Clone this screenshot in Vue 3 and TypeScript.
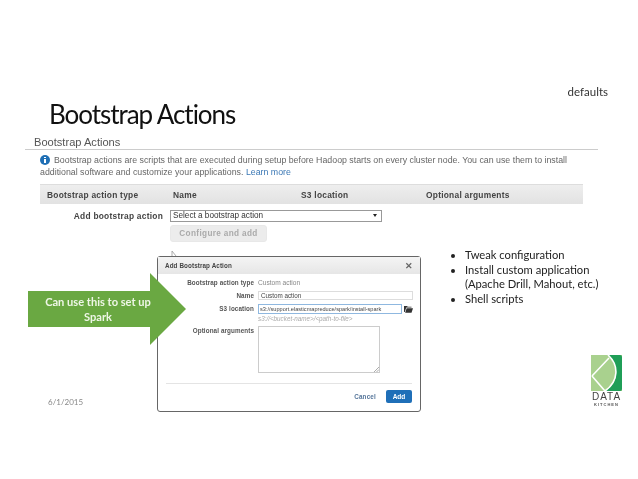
<script setup lang="ts">
const columns: string[] = ['Bootstrap action type', 'Name', 'S3 location', 'Optional arguments']
const bullets: string[] = ['Tweak configuration', 'Install custom application (Apache Drill, Mahout, etc.)', 'Shell scripts']
</script>

<template>
  <div class="slide">
    <p class="defaults">defaults</p>
    <h1 class="title">Bootstrap Actions</h1>

    <section class="console">
      <h2 class="console-title">Bootstrap Actions</h2>
      <p class="info">
        <span class="info-icon"></span>Bootstrap actions are scripts that are executed during setup before Hadoop starts on every cluster node. You can use them to install additional software and customize your applications. <a class="link">Learn more</a>
      </p>
      <div class="table-head">
        <span v-for="col in columns" :key="col" class="col">{{ col }}</span>
      </div>
      <div class="add-row">
        <label class="add-label">Add bootstrap action</label>
        <div class="add-controls">
          <div class="select">Select a bootstrap action<span class="caret"></span></div>
          <button class="configure">Configure and add</button>
        </div>
      </div>
    </section>

    <svg class="behind" viewBox="0 0 6 5" width="6" height="5">
      <path d="M1 5V0l4 5" fill="none" stroke="#999" stroke-width="0.8" />
    </svg>

    <div class="modal">
      <div class="modal-head">
        <span>Add Bootstrap Action</span>
        <span class="close">✕</span>
      </div>
      <div class="form">
        <span class="form-label">Bootstrap action type</span>
        <span class="static">Custom action</span>
        <span class="form-label">Name</span>
        <div class="input name">Custom action</div>
        <span class="form-label">S3 location</span>
        <div>
          <div class="s3-line">
            <div class="input s3">s3://support.elasticmapreduce/spark/install-spark</div>
            <svg class="folder" viewBox="0 0 12 10" width="9" height="8">
              <path d="M0 1h4l1 1h5v1H3L1 9H0zM3.500 4H12l-2 6H1.500z" fill="#333" />
            </svg>
          </div>
          <div class="hint">s3://&lt;bucket-name&gt;/&lt;path-to-file&gt;</div>
        </div>
        <span class="form-label">Optional arguments</span>
        <div class="textarea">
          <svg class="grip" viewBox="0 0 5 5" width="5" height="5">
            <path d="M0 5l5-5M2.500 5L5 2.500" stroke="#888" stroke-width="0.7" />
          </svg>
        </div>
      </div>
      <div class="modal-foot">
        <a class="cancel">Cancel</a>
        <button class="add">Add</button>
      </div>
    </div>

    <div class="arrow">
      <span class="arrow-text">Can use this to set up Spark</span>
    </div>

    <ul class="bullets">
      <li v-for="b in bullets" :key="b">{{ b }}</li>
    </ul>

    <span class="date">6/1/2015</span>

    <div class="logo">
      <svg viewBox="0 0 31 36" width="31" height="36">
        <rect width="31" height="36" fill="#a9d18e" />
        <path d="M17 0h12a2 2 0 0 1 2 2v32a2 2 0 0 1-2 2H14C26 30 30 14 17 0z" fill="#1f9e57" />
        <path d="M17 0c11 10 11 26-3 36M1 21L18 3M1 21l13 15" fill="none" stroke="#fff" stroke-width="1.600" />
      </svg>
      <span class="logo-data">DATA</span>
      <span class="logo-kitchen">KITCHEN</span>
    </div>
  </div>
</template>

<style scoped>
.slide {
  position: relative;
  width: 638px;
  height: 479px;
  overflow: hidden;
  background: #fff;
  font-family: "Liberation Sans", Arial, sans-serif;
  filter: blur(0.4px);
}

.defaults {
  margin: 0;
  padding: 85px 30px 0 0;
  text-align: right;
  font: 11.500px/14px Lato, sans-serif;
  color: #333;
}

.title {
  margin: 0;
  padding: 0 0 0 49px;
  height: 30px;
  font: 400 26px/30px Lato, sans-serif;
  letter-spacing: -1.050px;
  color: #111;
}

.console {
  margin: 5px 40px 0 25px;
}

.console-title {
  margin: 0;
  padding: 1px 0 0 9px;
  height: 14px;
  font-size: 11.100px;
  font-weight: 400;
  line-height: 15px;
  color: #555;
  border-bottom: 1px solid #ccc;
}

.info {
  margin: 5px 0 0 15px;
  width: 560px;
  font-size: 8.800px;
  line-height: 11.500px;
  color: #666;
}

.info-icon {
  display: inline-block;
  position: relative;
  width: 10px;
  height: 10px;
  margin-top: -2px;
  margin-right: 4px;
  border-radius: 50%;
  background: #1f6fb5;
  vertical-align: -2px;
}

/* the "i" of the info badge, drawn with two small bars */
.info-icon::before {
  content: "";
  position: absolute;
  left: 4px;
  top: 2px;
  width: 2px;
  height: 1px;
  background: #fff;
}

.info-icon::after {
  content: "";
  position: absolute;
  left: 4px;
  top: 4px;
  width: 2px;
  height: 4px;
  background: #fff;
}

.link {
  color: #3b78b5;
}

.table-head {
  display: grid;
  grid-template-columns: 126px 128px 125px 1fr;
  align-items: center;
  margin: 6px 15px 0 15px;
  height: 20px;
  padding-left: 7px;
  background: linear-gradient(#eeeeee, #e2e2e2);
  border-top: 1px solid #ddd;
  box-sizing: border-box;
}

.col {
  font-size: 8.400px;
  font-weight: 700;
  letter-spacing: 0.25px;
  color: #444;
}

.add-row {
  display: flex;
  gap: 7px;
  margin-top: 6px;
}

.add-label {
  width: 138px;
  text-align: right;
  font-size: 8.400px;
  font-weight: 700;
  letter-spacing: 0.25px;
  line-height: 12px;
  color: #444;
}

.add-controls {
  display: flex;
  flex-direction: column;
  align-items: flex-start;
  gap: 3px;
}

.select {
  position: relative;
  width: 212px;
  height: 12px;
  padding-left: 2px;
  box-sizing: border-box;
  border: 1px solid #999;
  font-size: 8.200px;
  line-height: 10px;
  color: #333;
}

.caret {
  position: absolute;
  right: 4px;
  top: 3px;
  border-left: 2px solid transparent;
  border-right: 2px solid transparent;
  border-top: 3px solid #222;
}

.configure {
  width: 97px;
  height: 17px;
  padding: 0;
  border: 1px solid #e8e8e8;
  border-radius: 3px;
  background: #ececec;
  font: 700 8.200px "Liberation Sans", Arial, sans-serif;
  letter-spacing: 0.35px;
  color: #aaa;
}

.behind {
  position: absolute;
  left: 171px;
  top: 251px;
}

.modal {
  position: absolute;
  left: 157px;
  top: 256px;
  width: 264px;
  height: 156px;
  box-sizing: border-box;
  border: 1.500px solid #666;
  border-radius: 3px;
  background: #fff;
  font-size: 6.300px;
}

.modal-head {
  display: flex;
  justify-content: space-between;
  align-items: center;
  height: 17px;
  padding: 0 7px;
  background: linear-gradient(#f4f4f4, #e6e6e6);
  font-weight: 700;
  letter-spacing: 0.1px;
  color: #444;
}

.close {
  font-size: 9px;
  color: #666;
}

.form {
  display: grid;
  grid-template-columns: 96px 1fr;
  column-gap: 4px;
  row-gap: 3px;
  align-items: start;
  padding: 4px 8px 0 0;
  height: 94px;
  box-sizing: border-box;
}

.form-label {
  text-align: right;
  font-weight: 700;
  letter-spacing: 0.1px;
  line-height: 10px;
  color: #555;
}

.static {
  font-size: 6.600px;
  line-height: 10px;
  color: #888;
}

.input {
  height: 9px;
  box-sizing: border-box;
  border: 1px solid #ddd;
  padding-left: 2px;
  font-size: 6.300px;
  line-height: 7px;
  color: #444;
  white-space: nowrap;
  overflow: hidden;
}

.s3-line {
  display: flex;
  align-items: center;
  gap: 2px;
}

.s3 {
  width: 144px;
  height: 10px;
  padding-left: 1px;
  font-size: 5.600px;
  line-height: 8px;
  border-color: #8fb8e0;
}

.folder {
  flex: none;
}

.hint {
  margin-top: 1px;
  font-size: 6.300px;
  font-style: italic;
  line-height: 8px;
  color: #aaa;
}

.textarea {
  position: relative;
  width: 122px;
  height: 47px;
  box-sizing: border-box;
  border: 1px solid #ccc;
}

.grip {
  position: absolute;
  right: 0;
  bottom: 0;
}

.modal-foot {
  display: flex;
  justify-content: flex-end;
  align-items: center;
  gap: 10px;
  margin: 15px 8px 0;
  padding-top: 6px;
  border-top: 1px solid #e4e4e4;
}

.cancel {
  font-weight: 700;
  letter-spacing: 0.2px;
  color: #55759a;
}

.add {
  width: 26px;
  height: 13px;
  padding: 0;
  border: 0;
  border-radius: 2px;
  background: #1f6fb8;
  color: #fff;
  font: 700 6.500px "Liberation Sans", Arial, sans-serif;
}

.arrow {
  position: absolute;
  left: 28px;
  top: 273px;
  width: 158px;
  height: 72px;
  display: flex;
  align-items: center;
  background: #6aa842;
  clip-path: polygon(0 18px, 122px 18px, 122px 0, 158px 36px, 122px 72px, 122px 54px, 0 54px);
}

.arrow-text {
  width: 140px;
  padding: 0 14px;
  box-sizing: border-box;
  text-align: center;
  font: 700 11.100px/15px Lato, sans-serif;
  color: #eef6e6;
}

.bullets {
  position: absolute;
  left: 465px;
  top: 248px;
  width: 145px;
  margin: 0;
  padding: 0;
  list-style: disc;
  font: 11.200px/14.500px Lato, sans-serif;
  color: #222;
}

.date {
  position: absolute;
  left: 48px;
  top: 397px;
  font: 8px/10px Lato, sans-serif;
  color: #888;
}

.logo {
  position: absolute;
  left: 591px;
  top: 355px;
  width: 31px;
  display: flex;
  flex-direction: column;
  align-items: center;
}

.logo svg {
  display: block;
}

.logo-data {
  margin-top: 1px;
  font: 10px/10px "Liberation Sans", Arial, sans-serif;
  letter-spacing: 1px;
  color: #444;
}

.logo-kitchen {
  font: 700 4px/5px "Liberation Sans", Arial, sans-serif;
  letter-spacing: 1px;
  color: #555;
}
</style>
